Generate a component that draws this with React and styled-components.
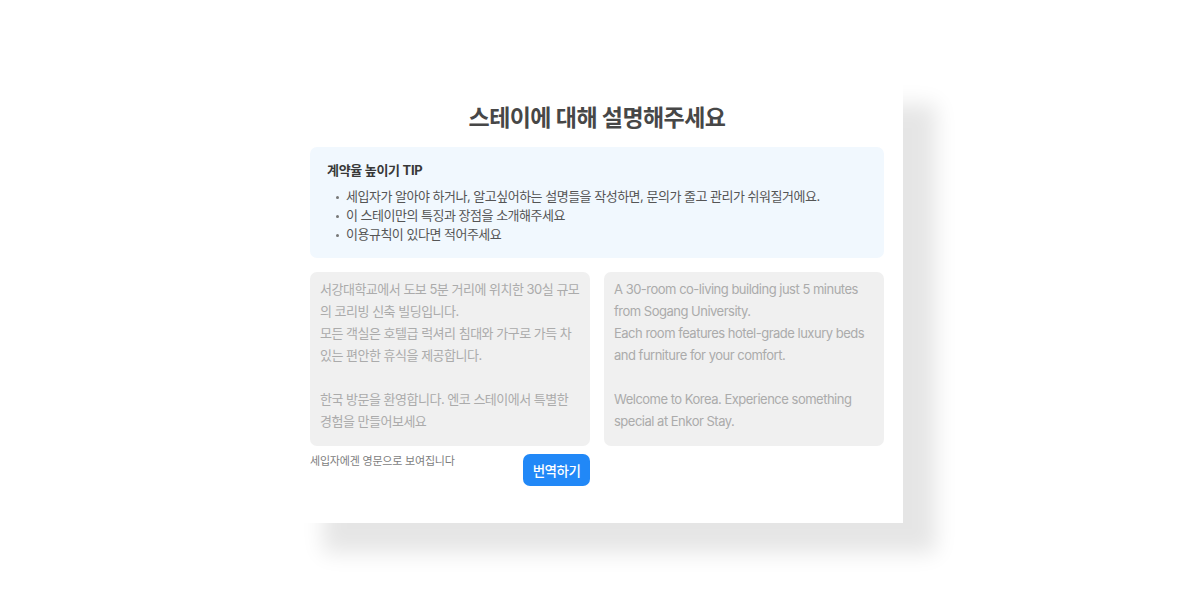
import React from "react";
import styled, { createGlobalStyle } from "styled-components";

const Global = createGlobalStyle`
  html, body { margin: 0; padding: 0; background: #ffffff; }
  body { font-family: "Inter", "Noto Sans CJK KR", sans-serif; }
`;

const Page = styled.div`
  display: flex;
  align-items: flex-start;
  padding: 74px 0 0 290px;
  min-height: 600px;
  box-sizing: border-box;
`;

const Card = styled.section`
  width: 613px;
  height: 449px;
  box-sizing: border-box;
  background: #ffffff;
  padding: 28px 19px 0 20px;
  box-shadow: 33px 30px 20px rgba(0, 0, 0, 0.1);
  display: flex;
  flex-direction: column;
`;

const Title = styled.h1`
  margin: 0;
  text-align: center;
  font-family: "Inter", "Noto Sans CJK KR", sans-serif;
  font-size: 23px;
  line-height: 32px;
  font-weight: 700;
  color: #474747;
  letter-spacing: -0.025em;
`;

const TipBox = styled.div`
  margin-top: 13px;
  background: #f1f8fe;
  border-radius: 7px;
  padding: 13px 17px 14px;
`;

const TipTitle = styled.div`
  font-size: 13px;
  line-height: 20px;
  font-weight: 700;
  color: #383838;
  letter-spacing: -0.3px;
`;

const TipList = styled.ul`
  margin: 7px 0 0;
  padding: 0 0 0 19px;
  list-style: none;
`;

const TipItem = styled.li`
  position: relative;
  font-size: 13px;
  line-height: 19px;
  color: #555555;
  letter-spacing: -0.5px;
  &::before {
    content: "";
    position: absolute;
    left: -10px;
    top: 9px;
    width: 3px;
    height: 3px;
    border-radius: 50%;
    background: #777777;
  }
`;

const Columns = styled.div`
  margin-top: 14px;
  display: grid;
  grid-template-columns: 280px 280px;
  column-gap: 14px;
`;

const Column = styled.div`
  display: flex;
  flex-direction: column;
`;

const TextBox = styled.div`
  height: 174px;
  box-sizing: border-box;
  background: #f0f0f0;
  border-radius: 7px;
  padding: 6px 10px;
  font-size: 13px;
  line-height: 22px;
  color: #ababab;
  letter-spacing: -0.5px;
  white-space: pre-wrap;
`;

const Footer = styled.div`
  margin-top: 8px;
  display: flex;
  justify-content: space-between;
  align-items: flex-start;
`;

const Caption = styled.span`
  font-size: 11px;
  line-height: 14px;
  color: #7d7d7d;
  letter-spacing: -0.2px;
`;

const TranslateButton = styled.button`
  width: 67px;
  height: 32px;
  padding: 0;
  border: none;
  border-radius: 7px;
  background: #2188f7;
  color: #ffffff;
  font-family: "Inter", "Noto Sans CJK KR", sans-serif;
  font-size: 13.5px;
  font-weight: 500;
  letter-spacing: -0.5px;
  cursor: pointer;
`;

const tips = [
  "세입자가 알아야 하거나, 알고싶어하는 설명들을 작성하면, 문의가 줄고 관리가 쉬워질거에요.",
  "이 스테이만의 특징과 장점을 소개해주세요",
  "이용규칙이 있다면 적어주세요",
];

const koText =
  "서강대학교에서 도보 5분 거리에 위치한 30실 규모의 코리빙 신축 빌딩입니다.\n모든 객실은 호텔급 럭셔리 침대와 가구로 가득 차 있는 편안한 휴식을 제공합니다.\n\n한국 방문을 환영합니다. 엔코 스테이에서 특별한 경험을 만들어보세요";

const enText =
  "A 30-room co-living building just 5 minutes from Sogang University.\nEach room features hotel-grade luxury beds and furniture for your comfort.\n\nWelcome to Korea. Experience something special at Enkor Stay.";

export default function App() {
  return (
    <>
      <Global />
      <Page>
        <Card>
          <Title>스테이에 대해 설명해주세요</Title>
          <TipBox>
            <TipTitle>계약율 높이기 TIP</TipTitle>
            <TipList>
              {tips.map((t) => (
                <TipItem key={t}>{t}</TipItem>
              ))}
            </TipList>
          </TipBox>
          <Columns>
            <Column>
              <TextBox>{koText}</TextBox>
              <Footer>
                <Caption>세입자에겐 영문으로 보여집니다</Caption>
                <TranslateButton>번역하기</TranslateButton>
              </Footer>
            </Column>
            <Column>
              <TextBox>{enText}</TextBox>
            </Column>
          </Columns>
        </Card>
      </Page>
    </>
  );
}
